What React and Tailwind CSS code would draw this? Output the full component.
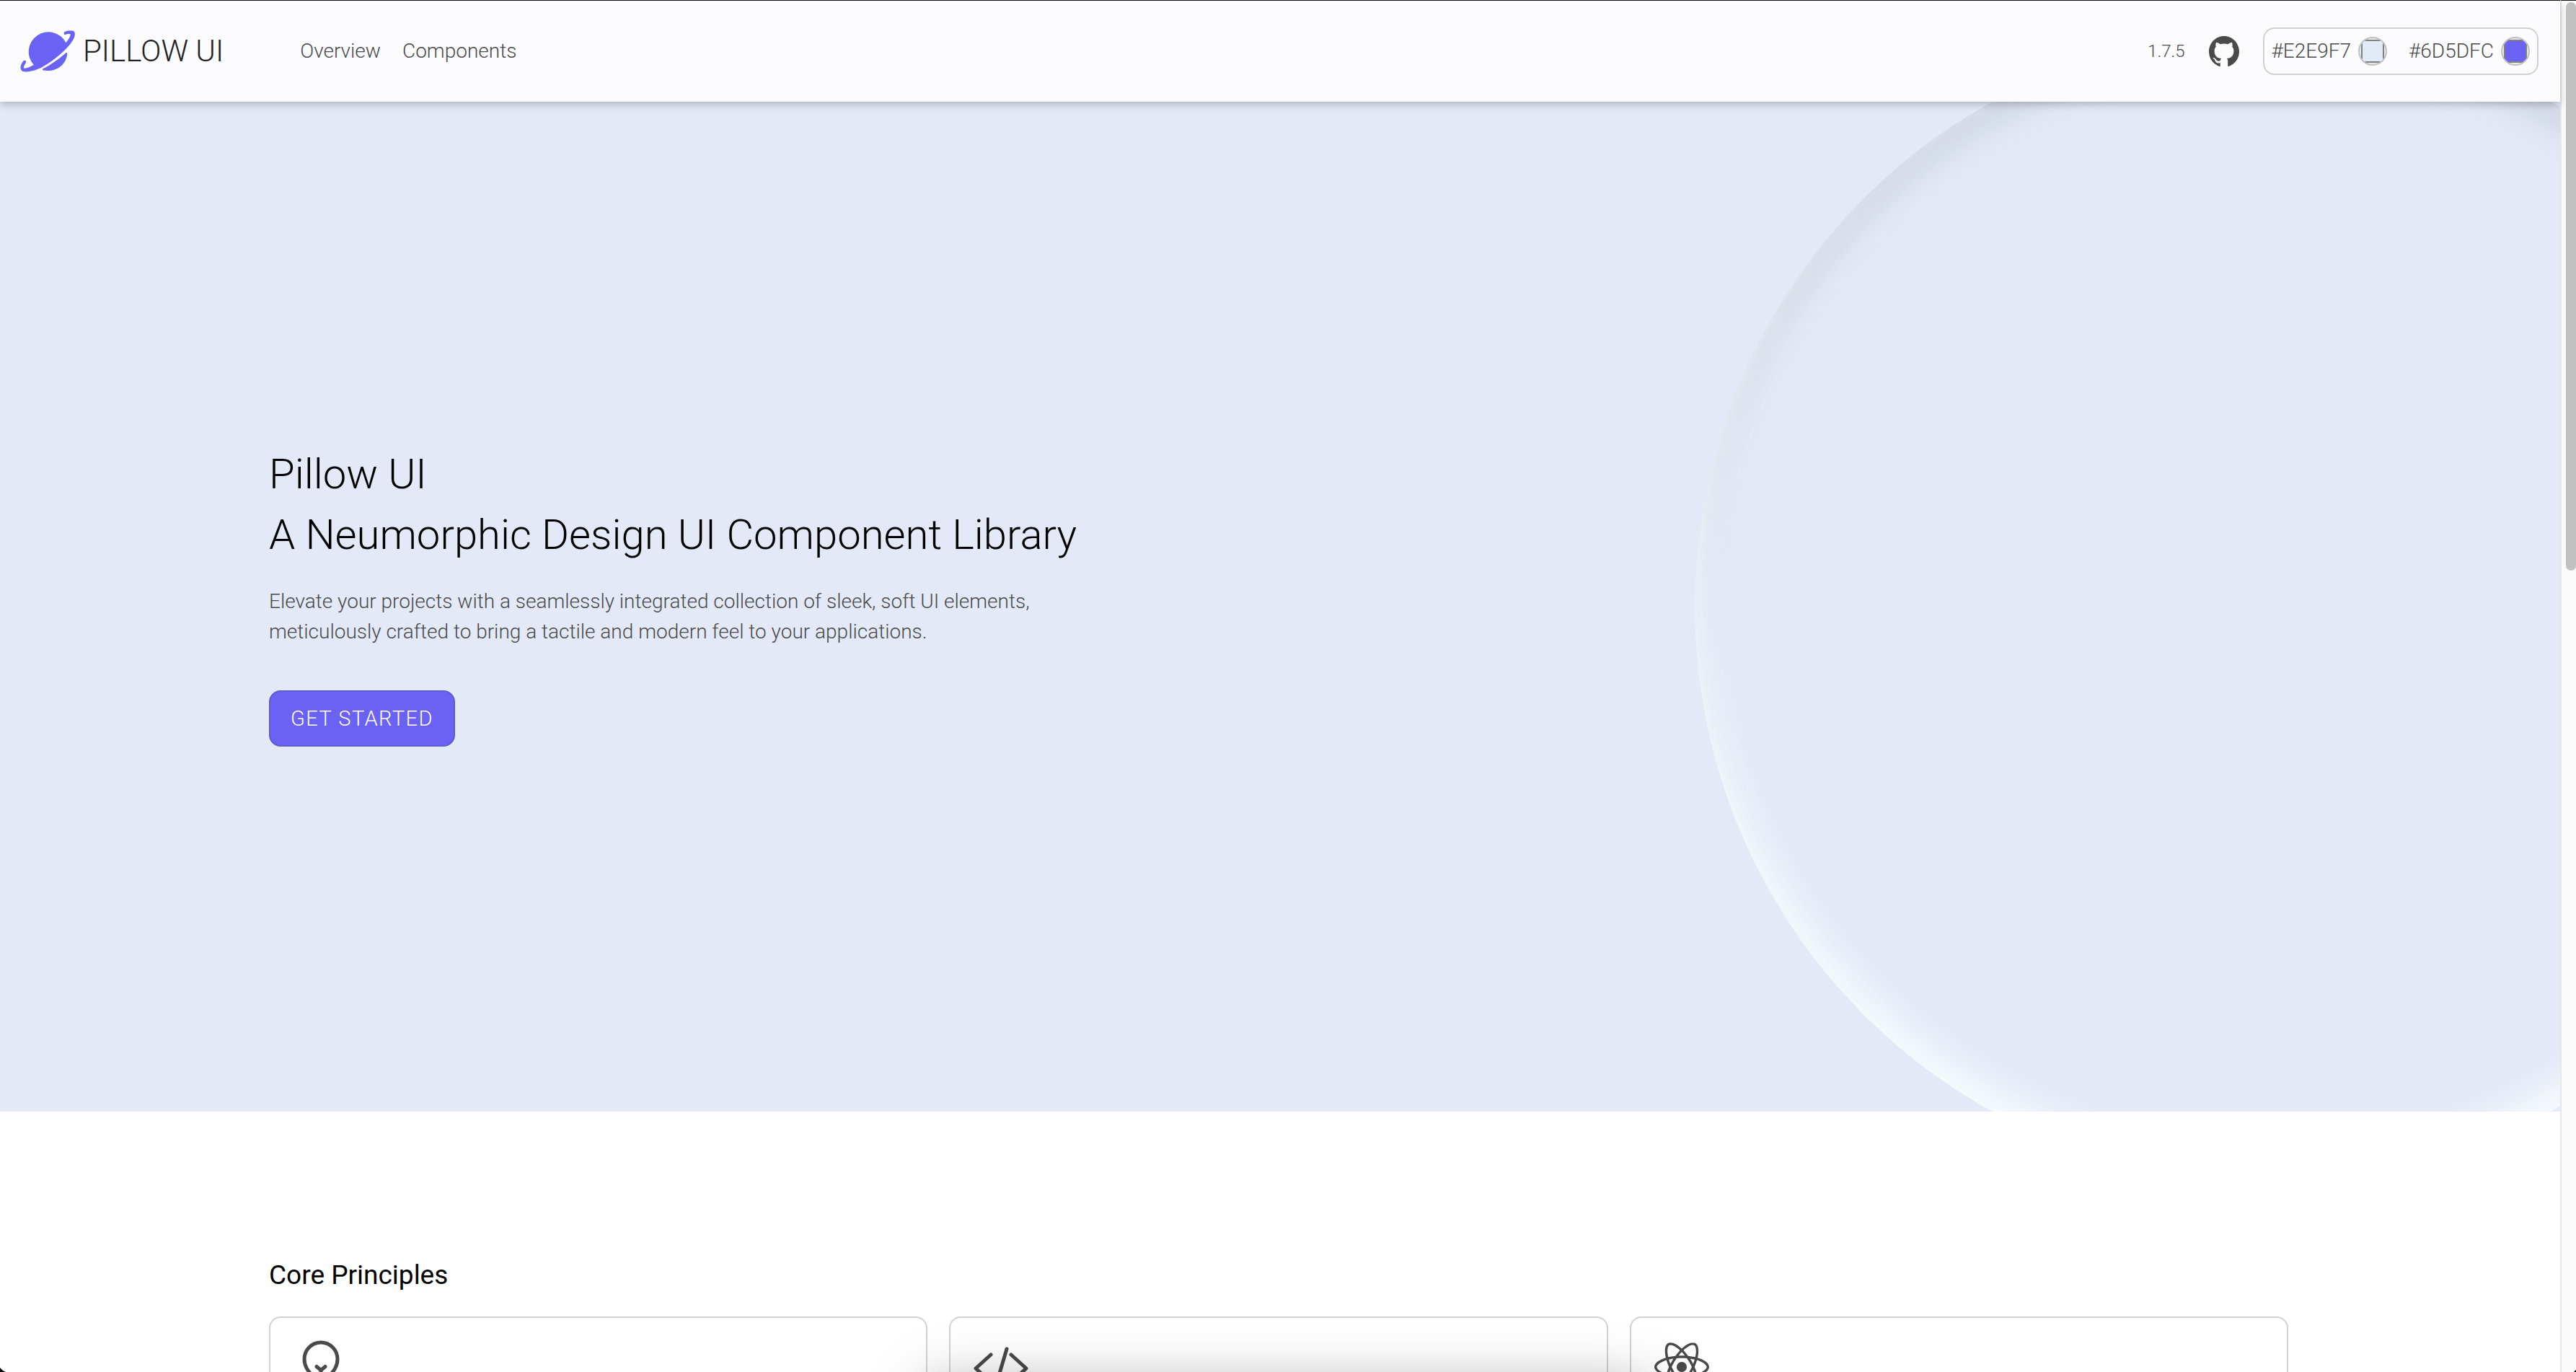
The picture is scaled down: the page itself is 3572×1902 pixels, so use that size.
import { IoLogoGithub } from "react-icons/io5";
import { SiReact } from "react-icons/si";

function PlanetLogo() {
  return (
    <svg viewBox="24 24 230 174" className="h-[58px] w-[77px] text-[#6a61f5]" fill="currentColor" aria-hidden="true">
      <path d="M80 168A82 82 0 1 1 214 76C228 56 234 46 232 40C224 38 216 40 211 43C204 43 204 32 209 30C224 25 240 24 248 29C256 40 248 62 226 88C196 124 150 158 110 180C80 194 50 200 33 194C20 184 24 168 36 152C40 146 50 150 48 156C42 168 38 174 38 182C50 184 64 176 80 168Z" />
      <path d="M118 184C150 168 185 143 212 119C216 115 220 117 219 122C216 160 184 191 140 192C130 192 122 192 118 190Q115 187 118 184Z" />
    </svg>
  );
}

function ColorField({ id, label, value }) {
  return (
    <div className="flex items-center gap-2.5">
      <label htmlFor={id}>{label}</label>
      <input
        id={id}
        type="color"
        defaultValue={value}
        className="size-10 appearance-none overflow-hidden rounded-full border-2 border-[#c1c1c4] bg-[#ebebee] p-0 [&::-webkit-color-swatch]:border-2 [&::-webkit-color-swatch]:border-[#808080] [&::-webkit-color-swatch]:rounded-none [&::-webkit-color-swatch-wrapper]:p-0.5"
      />
    </div>
  );
}

function Header() {
  return (
    <header className="relative z-10 flex h-[141px] items-center justify-between border-t border-[#111] bg-[#fcfcff] pr-[30px] pl-7 shadow-[0_4px_10px_rgba(0,0,0,0.22)]">
      <div className="flex items-center gap-[106px]">
        <a href="#home" className="flex items-center gap-2.5 text-[42px] leading-[60px] text-[#222]">
          <PlanetLogo />
          PILLOW UI
        </a>
        <nav className="flex gap-[30px]">
          <a href="#overview">Overview</a>
          <a href="#components">Components</a>
        </nav>
      </div>
      <div className="flex items-center gap-[30px]">
        <span className="text-2xl">1.7.5</span>
        <a href="#github" aria-label="GitHub">
          <IoLogoGithub className="size-12" />
        </a>
        <div className="flex gap-[30px] rounded-2xl border-2 border-[#d0d0d2] p-2.5">
          <ColorField id="base-color" label="#E2E9F7" value="#e2e9f7" />
          <ColorField id="accent-color" label="#6D5DFC" value="#6a61f5" />
        </div>
      </div>
    </header>
  );
}

function Hero() {
  return (
    <section className="relative h-[1400px] overflow-hidden bg-[#e3e9f7]">
      <div className="absolute top-1/2 -right-[400px] size-[1600px] -translate-y-1/2 rounded-full shadow-[inset_0_-30px_40px_6px_#f5fafc,inset_0_32px_44px_rgba(80,100,100,0.14)]" />
      <div className="relative mx-auto flex h-full max-w-[2804px] flex-col items-start justify-center pr-1 pb-8">
        <h1 className="text-[58px] leading-[84px] font-light text-black">
          Pillow UI
          <br />A Neumorphic Design UI Component Library
        </h1>
        <p className="mt-[30px] max-w-[1100px]">
          Elevate your projects with a seamlessly integrated collection of sleek, soft UI elements,
          meticulously crafted to bring a tactile and modern feel to your applications.
        </p>
        <button
          type="button"
          className="mt-[60px] rounded-2xl border-2 border-[#625bd0] bg-[#6a61f5] px-7 py-4 text-[29px] leading-[42px] tracking-wider text-white"
        >
          GET STARTED
        </button>
      </div>
    </section>
  );
}

function BulbIcon() {
  return (
    <svg viewBox="0 0 80 80" className="size-20" fill="none" stroke="currentColor" strokeWidth="5" strokeLinecap="round" strokeLinejoin="round">
      <path d="M30 60v-6c0-5-13-11-13-27a23 23 0 0 1 46 0c0 16-13 22-13 27v6z" />
      <path d="M34 37.500l6 5 6-5M40 42v18M31 68h18M35 76h10" />
    </svg>
  );
}

function CodeIcon() {
  return (
    <svg viewBox="0 0 80 80" className="size-20" fill="none" stroke="currentColor" strokeWidth="5" strokeLinecap="round" strokeLinejoin="round">
      <path d="M26 21L5 40l21 19M54 21l21 19-21 19M48 13l-16 54" />
    </svg>
  );
}

function Card({ children }) {
  return (
    <li className="flex h-[400px] items-start rounded-2xl border-2 border-[#d1d1d3] px-[30px] pt-[30px]">
      {children}
    </li>
  );
}

function Principles() {
  return (
    <section className="mx-auto max-w-[2804px] pt-[200px] pr-1">
      <h2 className="mb-[30px] text-[37px] leading-[54px] font-normal text-black">Core Principles</h2>
      <ul className="grid grid-cols-3 gap-[30px]">
        <Card>
          <BulbIcon />
        </Card>
        <Card>
          <CodeIcon />
        </Card>
        <Card>
          <SiReact className="mx-0.5 size-[76px]" />
        </Card>
      </ul>
    </section>
  );
}

export default function App() {
  return (
    <div className="relative flex h-screen overflow-hidden bg-white font-[Roboto,sans-serif] text-[28px] leading-[42px] font-light text-[#4a4a4a]">
      <main className="min-w-0 flex-1">
        <Header />
        <Hero />
        <Principles />
      </main>
      <div className="w-[22px] shrink-0 border-t border-l-2 border-t-[#111] border-l-[#e7e7e9] bg-[#fafafa] pt-0.5 pl-1.5">
        <div className="h-[788px] rounded-full bg-[#c1c1c1]" />
      </div>
      <div className="pointer-events-none absolute top-full left-[36%] mt-5 h-40 w-[28%] shadow-[0_0_80px_rgba(0,0,0,0.36)]" />
      <svg viewBox="0 0 8 6" className="absolute bottom-0 left-0 h-1.5 w-2">
        <path d="M0 0Q3 4 8 6H0z" />
      </svg>
      <svg viewBox="0 0 3 3" className="absolute right-0 bottom-0 size-[3px]">
        <path d="M3 0v3H0z" />
      </svg>
    </div>
  );
}
